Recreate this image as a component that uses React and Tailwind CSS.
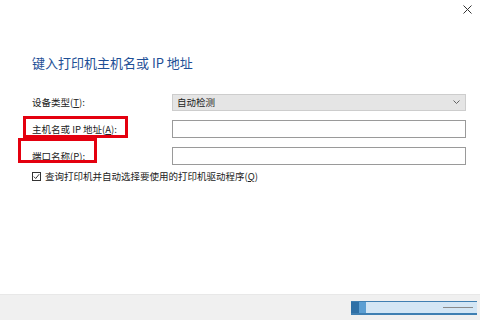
import { useState } from "react";

const cjk = "font-['Microsoft_YaHei','Noto_Sans_CJK_SC',sans-serif]";

const Row = ({ label, children, mark }) => {
  return (
    <div className="flex items-center h-[18px]">
      <div className="relative w-[140px] text-[9.5px] leading-[12px] text-[#222]">
        {label}
        {/* red annotation box */}
        {mark && <div className={"absolute border-[3px] border-[#e4000f] " + mark} />}
      </div>
      {children}
    </div>
  );
};

const App = () => {
  const [host, setHost] = useState("");
  const [port, setPort] = useState("");
  const [query, setQuery] = useState(true);

  return (
    <div className={"w-[480px] h-[320px] bg-white flex flex-col overflow-hidden " + cjk}>
      {/* title bar */}
      <div className="flex justify-end h-[18px] pt-[5px] pr-[8px]">
        <svg width="9" height="9" viewBox="0 0 9 9" className="text-[#333]">
          <path d="M0.5 0.5 L8.5 8.5 M8.5 0.5 L0.5 8.5" stroke="currentColor" strokeWidth="1" />
        </svg>
      </div>

      <div className="flex-1 pl-[32px]">
        <h1 className="mt-[36px] h-[18px] text-[13px] leading-[18px] text-[#1e4f96] font-normal">
          键入打印机主机名或 IP 地址
        </h1>

        <div className="mt-[21px] flex flex-col gap-[9px] w-[434px]">
          <Row
            label={
              <span>
                设备类型(<span className="underline">T</span>):
              </span>
            }
          >
            <div className="flex-1 h-[17px] bg-[#e5e5e5] border border-[#cdcdcd] flex items-center justify-between pl-[4px] pr-[5px] text-[9.5px] text-[#222]">
              <span>自动检测</span>
              <svg width="7" height="4" viewBox="0 0 7 4">
                <path d="M0.5 0.5 L3.5 3.5 L6.5 0.5" fill="none" stroke="#555" strokeWidth="0.9" />
              </svg>
            </div>
          </Row>

          <Row
            mark="left-[-9px] top-[-7px] w-[105px] h-[22px]"
            label={
              <span>
                主机名或 IP 地址(<span className="underline">A</span>):
              </span>
            }
          >
            <input
              value={host}
              onChange={(e) => setHost(e.target.value)}
              className="flex-1 h-[18px] border border-[#9a9a9a] bg-white outline-none px-[3px] text-[9.5px]"
            />
          </Row>

          <Row
            mark="left-[-14px] top-[-12px] w-[79px] h-[25px]"
            label={
              <span>
                端口名称(<span className="underline">P</span>):
              </span>
            }
          >
            <input
              value={port}
              onChange={(e) => setPort(e.target.value)}
              className="flex-1 h-[18px] border border-[#9a9a9a] bg-white outline-none px-[3px] text-[9.5px]"
            />
          </Row>
        </div>

        {/* checkbox */}
        <label className="mt-[5px] flex items-center gap-[4px] h-[12px] text-[9.5px] leading-[12px] text-[#222]">
          <span
            onClick={() => setQuery(!query)}
            className="w-[9px] h-[9px] border border-[#333] bg-white flex items-center justify-center"
          >
            {query && (
              <svg width="7" height="7" viewBox="0 0 7 7">
                <path d="M0.8 3.6 L2.7 5.5 L6.2 1.2" fill="none" stroke="#222" strokeWidth="0.9" />
              </svg>
            )}
          </span>
          <span>
            查询打印机并自动选择要使用的打印机驱动程序(<span className="underline">Q</span>)
          </span>
        </label>
      </div>

      {/* footer */}
      <div className="h-[26px] bg-[#f0f0f0] border-t border-[#e8e8e8] flex justify-end items-start pt-[6px] pr-[3px]">
        <div className="w-[126px] h-[14px] flex bg-[#d3e6f5] border-t border-b-2 border-[#3f7fb2]">
          <div className="w-[8px] bg-[#2f70a6]" />
          <div className="w-[7px] bg-[#5c9fd3]" />
          <div className="flex-1 flex items-center justify-end pr-[4px]">
            <div className="w-[30px] h-[1px] bg-[#8a8a8a]" />
          </div>
        </div>
      </div>
    </div>
  );
};

export default App;
